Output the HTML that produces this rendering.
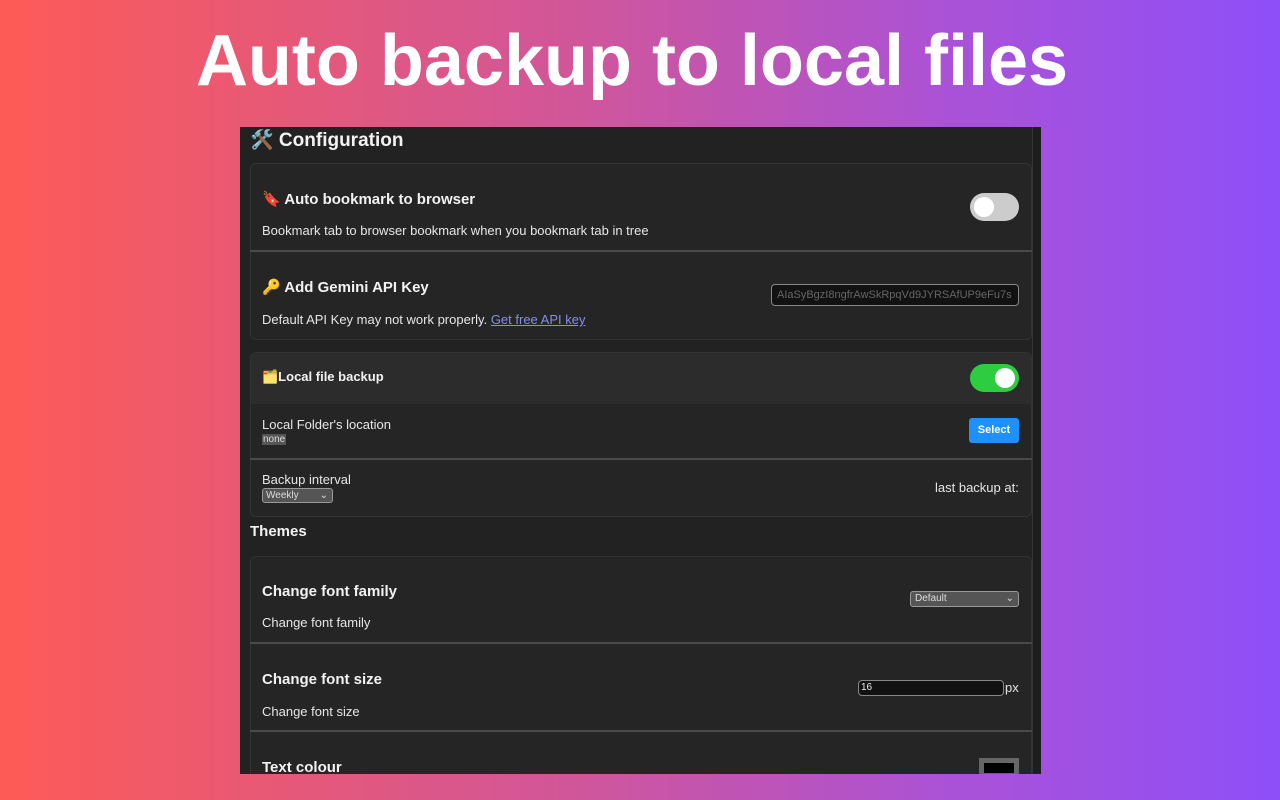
<!DOCTYPE html>
<html><head><style>
*{margin:0;padding:0;box-sizing:border-box}
body{width:1280px;height:800px;overflow:hidden;background:linear-gradient(90deg,#fd5b56 0%,#d0569a 45%,#a952d8 75%,#8e4ff8 100%);font-family:"Liberation Sans","DejaVu Sans",sans-serif;position:relative}
h1{position:absolute;left:0;width:1264px;top:20px;text-align:center;color:#fff;font-size:72px;font-weight:bold;letter-spacing:0px}
.panel{position:absolute;left:240px;top:127px;width:801px;height:647px;background:#222;overflow:hidden;color:#e8e8e8}
.sb{position:absolute;right:0;top:0;width:9px;height:100%;background:#1e1e1e;border-left:1px solid #333}
.card{position:absolute;left:10px;width:782px;background:#252525;border:1px solid #333;border-radius:6px}
.hr{position:absolute;left:10px;width:782px;height:2px;background:#4a4a4a}
.t{position:absolute;font-weight:bold;font-size:15px;color:#f2f2f2}
.s{position:absolute;font-size:13px;color:#e6e6e6}
.tog{position:absolute;width:49px;height:28px;border-radius:14px}
.tog i{position:absolute;top:4px;width:20px;height:20px;border-radius:50%;background:#fff}
</style></head><body>
<h1>Auto backup to local files</h1>
<div class="panel">
<div class="sb"></div>
<div class="t" style="left:10px;top:1px;font-size:19px">🛠️ Configuration</div>
<div class="card" style="top:36px;height:177px"></div>
<div class="t" style="left:22px;top:63px">🔖 Auto bookmark to browser</div>
<div class="s" style="left:22px;top:96px">Bookmark tab to browser bookmark when you bookmark tab in tree</div>
<div class="tog" style="left:730px;top:66px;background:#ccc"><i style="left:4px"></i></div>
<div class="hr" style="top:123px"></div>
<div class="t" style="left:22px;top:151px">🔑 Add Gemini API Key</div>
<div class="s" style="left:22px;top:185px">Default API Key may not work properly. <span style="color:#8a8af0;text-decoration:underline">Get free API key</span></div>
<div style="position:absolute;left:531px;top:157px;width:248px;height:22px;background:#121212;border:1px solid #888;border-radius:4px;color:#666;font-size:11px;padding:4px 5px">AIaSyBgzI8ngfrAwSkRpqVd9JYRSAfUP9eFu7s</div>

<div class="card" style="top:225px;height:165px"></div>
<div style="position:absolute;left:11px;top:226px;width:780px;height:51px;background:#2c2c2c;border-radius:6px 6px 0 0"></div>
<div class="t" style="left:22px;top:242px;font-size:13px">🗂️Local file backup</div>
<div class="tog" style="left:730px;top:237px;background:#2ecc40"><i style="left:25px"></i></div>
<div class="s" style="left:22px;top:290px">Local Folder's location</div>
<div style="position:absolute;left:22px;top:307px;font-size:10px;background:#555;color:#ddd;padding:0 1px">none</div>
<div style="position:absolute;left:729px;top:291px;width:50px;height:25px;background:#1e90ff;border-radius:3px;color:#fff;font-size:11px;font-weight:bold;text-align:center;line-height:25px">Select</div>
<div class="hr" style="top:331px"></div>
<div class="s" style="left:22px;top:345px">Backup interval</div>
<div style="position:absolute;left:22px;top:361px;width:71px;height:15px;background:#555;border:1px solid #999;border-radius:3px;font-size:10px;color:#ddd;padding-left:3px;line-height:13px">Weekly<span style="position:absolute;right:4px">⌄</span></div>
<div class="s" style="left:695px;top:353px">last backup at:</div>

<div class="t" style="left:10px;top:396px">Themes</div>
<div class="card" style="top:429px;height:240px"></div>
<div class="t" style="left:22px;top:456px">Change font family</div>
<div class="s" style="left:22px;top:488px">Change font family</div>
<div style="position:absolute;left:670px;top:464px;width:109px;height:16px;background:#555;border:1px solid #999;border-radius:3px;font-size:10px;color:#ddd;padding-left:4px;line-height:14px">Default<span style="position:absolute;right:4px">⌄</span></div>
<div class="hr" style="top:515px"></div>
<div class="t" style="left:22px;top:544px">Change font size</div>
<div class="s" style="left:22px;top:577px">Change font size</div>
<div style="position:absolute;left:618px;top:553px;width:146px;height:16px;background:#121212;border:1px solid #888;border-radius:4px;font-size:10px;color:#eee;padding-left:2px;line-height:14px">16</div>
<div class="s" style="left:765px;top:553px">px</div>
<div class="hr" style="top:603px"></div>
<div class="t" style="left:22px;top:632px">Text colour</div>
<div style="position:absolute;left:739px;top:631px;width:40px;height:20px;background:#666;padding:5px"><div style="background:#000;width:100%;height:100%"></div></div>
</div>
</body></html>
